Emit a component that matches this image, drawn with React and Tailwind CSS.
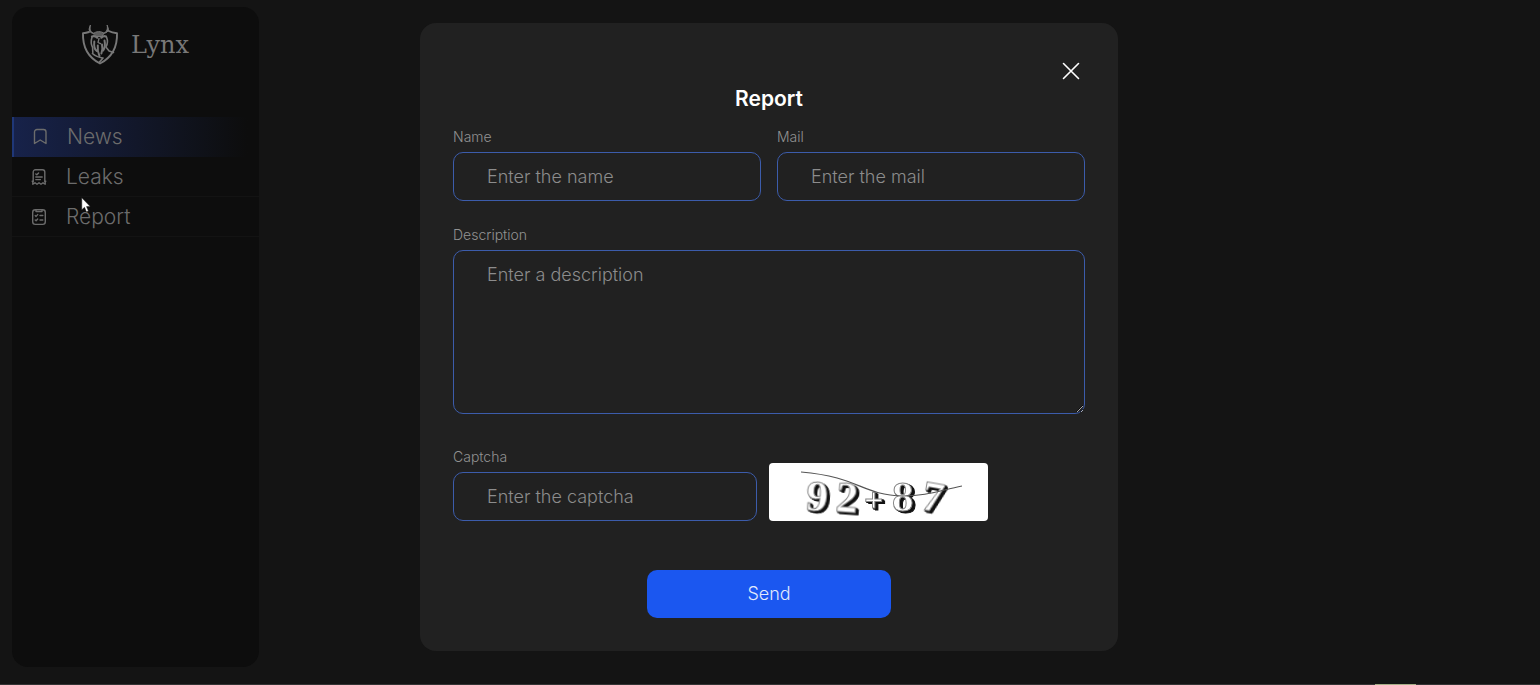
import React from 'react';

const BookmarkIcon = () => (
    <svg width="16" height="18" viewBox="0 0 16 18" fill="none" stroke="currentColor" strokeWidth="1.4" strokeLinejoin="round">
        <path d="M2.500 15.500V4A2.500 2.500 0 0 1 5 1.500h6.500A2.500 2.500 0 0 1 14 4v11.500l-5.800-3.500z" />
    </svg>
);

const ReceiptIcon = () => (
    <svg width="16" height="18" viewBox="0 0 16 18" fill="none" stroke="currentColor" strokeWidth="1.4" strokeLinecap="round" strokeLinejoin="round">
        <path d="M2.200 13.200V4a2.300 2.300 0 0 1 2.300-2.300h7A2.300 2.300 0 0 1 13.800 4v9.200" />
        <path d="M13.800 13.200h1M1.200 13.200h1M1.800 13.200V16.200l2.200-1.400 2 1.400 2-1.400 2 1.400 2-1.400 2.200 1.400v-3" />
        <path d="M4.800 6l1 .8 1.800-1.900M4.800 9h6.400M4.800 11.600h4.600" />
    </svg>
);

const ClipboardIcon = () => (
    <svg width="16" height="18" viewBox="0 0 16 18" fill="none" stroke="currentColor" strokeWidth="1.4" strokeLinecap="round" strokeLinejoin="round">
        <rect x="1.7" y="1.8" width="12.6" height="14.6" rx="2.6" />
        <path d="M5 2v1.600h6V2" />
        <path d="M4.200 7.600l.9.8 1.600-1.800M9 7.500h2.800M4.200 12l.9.8 1.600-1.800M9 12h2.800" />
    </svg>
);

const LogoIcon = () => (
    <svg width="38" height="42" viewBox="0 0 38 42" fill="none" stroke="currentColor" strokeLinecap="round" strokeLinejoin="round">
        <path d="M8 8C6 8.700 4.500 9 2 9.200c-.4 12.300 3.500 23.300 17 30.300C32.500 32.500 36.400 21.500 36 9.200c-3-.2-6-1-9.500-2.700" strokeWidth="1.9" />
        <path d="M9.300 1.500c-1 4 .5 7 4 8-3 0-5-1.500-5.200-4zM26.200 1.500c.8 4-.6 6.800-4 7.800 3 0 5-1.500 5.200-4z" strokeWidth="1" fill="currentColor" />
        <path d="M12.500 9.500c2-2.500 8.500-2.500 10.500 0l-2.500 3h-5z" strokeWidth="1" fill="currentColor" fillOpacity=".75" />
        <path d="M11 12.500c2-.8 3.500-.4 5.200 1.200M25 12.500c-1.800-.8-3.200-.4-4.700 1.200" strokeWidth="2.2" />
        <path d="M18 14.500l-1 4 2.600 1.200" strokeWidth="1.300" />
        <path d="M11 13c-1.200 4-1 7.500.6 10.500l.2 5M25.500 13c1.600 4 1.200 7-.6 10l3.200 4 4.400 1.500" strokeWidth="1.600" />
        <path d="M13.300 17.500c-.5 4.500.2 8 2.400 9.500M16.800 21.500c-.5 4 .1 7 1.700 10.500M21 20.500c.8 3.500.5 6-.6 9M23.500 16.500c1 4.500.3 7.500-1.300 10" strokeWidth="2" />
        <path d="M11.500 29.500c3 3 6.500 4 10.500 4.500l-3.500 4" strokeWidth="1.700" />
    </svg>
);

const navItems = [
    { name: 'News', icon: BookmarkIcon, active: true },
    { name: 'Leaks', icon: ReceiptIcon },
    { name: 'Report', icon: ClipboardIcon },
];

const Sidebar = () => (
    <aside className="w-[247px] ml-3 mt-[7px] mb-[18px] rounded-2xl bg-[#0d0d0d] text-[#6c6c6c]">
        <a href="#home" className="flex items-center gap-3 pl-[69px] pt-[17px] text-[#787878]">
            <LogoIcon />
            <span className="text-2xl font-['DejaVu_Serif',serif]">Lynx</span>
        </a>
        <nav className="mt-[51px] font-light">
            {navItems.map(({ name, icon: Icon, active }) => (
                <a
                    key={name}
                    href={`#${name.toLowerCase()}`}
                    className={
                        active
                            ? 'flex items-center h-10 pl-[18px] gap-[19px] text-[21px] border-l-2 border-[#1f3778] bg-gradient-to-r from-[#17224a] via-[#12172a] to-[#0d0d0d] to-95%'
                            : 'flex items-center h-10 pl-[19px] gap-[19px] text-[21px] border-b border-[#131313]'
                    }
                >
                    <Icon />
                    {name}
                </a>
            ))}
        </nav>
    </aside>
);

const Field = ({ id, label, placeholder, type = 'text', className = '' }) => (
    <div className={className}>
        <label htmlFor={id} className="block text-sm leading-4 mb-[7px] text-[#929292]">{label}</label>
        <input
            id={id}
            type={type}
            placeholder={placeholder}
            className="block w-full h-[49px] px-[33px] rounded-[10px] border border-[#3c5cab] bg-transparent text-lg placeholder:text-[#8c8c8c] focus:outline-none"
        />
    </div>
);

const captchaGlyphs = [
    { char: '9', x: 37, y: 48, size: 44, rotate: 4 },
    { char: '2', x: 67, y: 49, size: 44, rotate: 4 },
    { char: '+', x: 95, y: 48, size: 34, rotate: 0 },
    { char: '8', x: 123, y: 48, size: 43, rotate: 0 },
    { char: '7', x: 153, y: 48, size: 43, rotate: 10 },
];

const Captcha = () => (
    <svg width="219" height="58" viewBox="0 0 219 58" role="img" aria-label="Captcha" className="overflow-visible rounded bg-white">
        {captchaGlyphs.map(({ char, x, y, size, rotate }) => (
            <text
                key={char}
                x={x}
                y={y}
                fontSize={size}
                transform={`rotate(${rotate} ${x + 10} 35)`}
                className="font-['Liberation_Serif',serif] font-bold fill-white stroke-[#888888] [filter:drop-shadow(1px_1px_0_#111111)_drop-shadow(2px_1px_0_#111111)]"
            >
                {char}
            </text>
        ))}
        <path d="M32 9C91 14 92 32 134 33C157 33 169 28 193 23" fill="none" stroke="#555" strokeWidth="1.2" />
    </svg>
);

const ReportModal = () => (
    <div className="absolute inset-0 flex justify-center items-start pt-[23px] pr-[2px]">
        <form className="w-[698px] px-[33px] pt-9 pb-[33px] rounded-2xl bg-[#212121] font-light" onSubmit={(e) => e.preventDefault()}>
            <div className="flex justify-end">
                <button type="button" aria-label="Close" className="size-6 mr-[2px] flex items-center justify-center text-white">
                    <svg width="18" height="18" viewBox="0 0 18 18" fill="none" stroke="currentColor" strokeWidth="1.6" strokeLinecap="round">
                        <path d="M1.500 1.500l15 15M16.500 1.500l-15 15" />
                    </svg>
                </button>
            </div>
            <h2 className="mt-1 mb-[18px] text-center text-[21px] leading-6 font-semibold text-white">Report</h2>

            <div className="grid grid-cols-2 gap-4">
                <Field id="name" label="Name" placeholder="Enter the name" />
                <Field id="mail" label="Mail" type="email" placeholder="Enter the mail" />
            </div>

            <div className="mt-[26px]">
                <label htmlFor="description" className="block text-sm leading-4 mb-[7px] text-[#929292]">Description</label>
                <textarea
                    id="description"
                    placeholder="Enter a description"
                    className="block w-full h-[164px] px-[33px] py-3 rounded-[10px] border border-[#3c5cab] bg-transparent text-lg leading-6 placeholder:text-[#8c8c8c] focus:outline-none [color-scheme:dark]"
                />
            </div>

            <div className="flex items-end gap-3 mt-[35px]">
                <Field id="captcha" label="Captcha" placeholder="Enter the captcha" className="w-[304px]" />
                <Captcha />
            </div>

            <button type="submit" className="block w-[244px] h-12 mx-auto mt-[49px] rounded-[10px] bg-[#1b57f0] text-lg text-[#e2eafc]">
                Send
            </button>
        </form>
    </div>
);

const Cursor = () => (
    <svg width="10" height="16" viewBox="0 0 10 16" className="absolute left-[81px] top-[197px]">
        <path d="M.8.8v12l2.700-2.500 1.900 4.500 2-.9-1.900-4.300h3.700z" fill="#fff" stroke="#222" strokeWidth=".5" />
    </svg>
);

export default function App() {
    return (
        <div className="relative min-h-screen flex flex-col bg-[#141414] font-[Inter,sans-serif]">
            <div className="flex flex-1 -mb-px">
                <Sidebar />
            </div>
            <div className="flex h-px bg-[#343434]">
                <div className="ml-auto mr-[124px] w-[41px] bg-[#a5ae87]" />
            </div>
            <ReportModal />
            <Cursor />
        </div>
    );
}
